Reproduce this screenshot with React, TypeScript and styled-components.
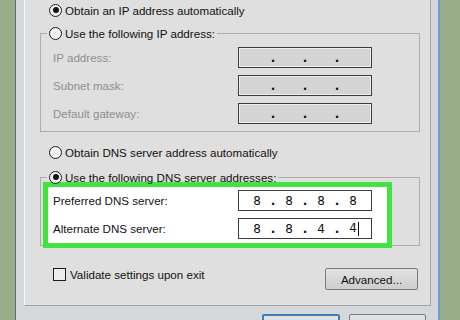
import * as React from 'react';
import styled, { createGlobalStyle } from 'styled-components';

const GlobalStyle = createGlobalStyle`
    html, body {
        margin: 0;
        padding: 0;
        background: #97ae88;
    }
    body {
        font-family: "Liberation Sans", Arial, sans-serif;
        font-size: 11.6px;
        color: #111;
    }
`;

const Page = styled.div`
    display: flex;
    width: 460px;
    height: 320px;
    overflow: hidden;
    background: #97ae88;
`;

const Window = styled.div`
    display: flex;
    flex-direction: column;
    margin-left: 15px;
    width: 407px;
    padding: 0 7px 0 8px;
    background: #d5d8db;
    border-left: 1px solid #5d6b74;
    border-right: 2px solid #6c9dd0;
`;

const Panel = styled.div`
    display: flex;
    flex-direction: column;
    padding: 2px 0 15px;
    background: #dfdfdf;
    border-left: 1px solid #f7f7f7;
    border-right: 1px solid #a3a3a3;
    border-bottom: 1px solid #a3a3a3;
`;

const OptionRow = styled.div<{ $gap?: number }>`
    display: flex;
    align-items: center;
    height: 16px;
    padding-left: 24px;
    margin-top: ${p => p.$gap || 0}px;
`;

const RadioCircle = styled.span<{ $checked?: boolean }>`
    display: flex;
    align-items: center;
    justify-content: center;
    flex: none;
    box-sizing: border-box;
    width: 13px;
    height: 13px;
    margin-right: 3px;
    border: 1.5px solid #1c1c1c;
    border-radius: 50%;
    background: #f2f2f2;

    &::after {
        content: '';
        display: ${p => (p.$checked ? 'block' : 'none')};
        width: 6px;
        height: 6px;
        border-radius: 50%;
        background: #111;
    }
`;

const GroupBox = styled.fieldset<{ $gap: number }>`
    margin: ${p => p.$gap}px 10px 0 15px;
    padding: 0;
    min-inline-size: 0;
    border: 1px solid #adadad;
`;

const GroupLegend = styled.legend`
    display: flex;
    align-items: center;
    height: 16px;
    margin-left: 6px;
    padding: 0 2px;
`;

const FieldGrid = styled.div`
    display: flex;
    flex-direction: column;
    gap: 7px;
    padding: 6px 0 7px 12px;
`;

const FieldRow = styled.div`
    display: flex;
    align-items: center;
`;

const FieldLabel = styled.span<{ $disabled?: boolean }>`
    width: 185px;
    color: ${p => (p.$disabled ? '#8e8e8e' : '#111')};
`;

const IpField = styled.div<{ $disabled?: boolean }>`
    display: flex;
    justify-content: center;
    align-items: center;
    box-sizing: border-box;
    width: 134px;
    height: 21px;
    border: 1px solid #3c3c3c;
    background: ${p => (p.$disabled ? '#d4d4d4' : '#fff')};
    box-shadow: inset 0 0 0 1px ${p => (p.$disabled ? '#ededed' : '#fff')};
    font-family: "DejaVu Sans", sans-serif;
    font-size: 12px;
`;

const Segment = styled.span`
    width: 26px;
    text-align: center;
`;

const Dot = styled.span`
    width: 6px;
    text-align: center;
    font-weight: bold;
`;

const Caret = styled.span`
    display: inline-block;
    width: 1px;
    height: 14px;
    margin: 0 -2px 0 1px;
    vertical-align: middle;
    background: #111;
`;

const Highlight = styled.div`
    display: flex;
    flex-direction: column;
    gap: 7px;
    width: 329px;
    margin: -3px 0 -3px 2px;
    padding: 3px 5px 4px;
    border: 5px solid #40e340;
    background: #fff;
`;

const ActionRow = styled.div`
    display: flex;
    justify-content: space-between;
    align-items: flex-start;
    margin-top: 22px;
    padding: 0 12px 0 28px;
`;

const CheckLabel = styled.label`
    display: flex;
    align-items: center;
    height: 13px;
`;

const CheckBox = styled.span`
    box-sizing: border-box;
    width: 13px;
    height: 13px;
    margin-right: 4px;
    border: 1.5px solid #1c1c1c;
    background: #ededed;
`;

const PushButton = styled.button<{ $primary?: boolean; $width: number }>`
    box-sizing: border-box;
    flex: none;
    width: ${p => p.$width}px;
    height: 22px;
    padding: 0;
    font: inherit;
    color: #111;
    border: ${p => (p.$primary ? '2px solid #3f7db3' : '1px solid #7a7a7a')};
    border-radius: 2px;
    background: linear-gradient(#e2e2e2, #cdcdcd);
`;

// OK / Cancel are cut off by the bottom edge; only their top frame shows
const DialogButtons = styled.div`
    display: flex;
    justify-content: flex-end;
    gap: 9px;
    margin-top: 8px;
    padding-right: 5px;

    ${PushButton} {
        height: 44px;
    }
`;

function Address({ parts, disabled, caret }: { parts: string[]; disabled?: boolean; caret?: boolean }) {
    return (
        <IpField $disabled={disabled}>
            {parts.map((p, i) => (
                <React.Fragment key={i}>
                    {i > 0 && <Dot>.</Dot>}
                    <Segment>
                        {p}
                        {caret && i === parts.length - 1 && <Caret />}
                    </Segment>
                </React.Fragment>
            ))}
        </IpField>
    );
}

const blank = ['', '', '', ''];

export default function App() {
    return (
        <Page>
            <GlobalStyle />
            <Window>
                <Panel>
                    <OptionRow>
                        <RadioCircle $checked />
                        Obtain an IP address automatically
                    </OptionRow>
                    <GroupBox $gap={7}>
                        <GroupLegend>
                            <RadioCircle />
                            Use the following IP address:
                        </GroupLegend>
                        <FieldGrid>
                            <FieldRow>
                                <FieldLabel $disabled>IP address:</FieldLabel>
                                <Address parts={blank} disabled />
                            </FieldRow>
                            <FieldRow>
                                <FieldLabel $disabled>Subnet mask:</FieldLabel>
                                <Address parts={blank} disabled />
                            </FieldRow>
                            <FieldRow>
                                <FieldLabel $disabled>Default gateway:</FieldLabel>
                                <Address parts={blank} disabled />
                            </FieldRow>
                        </FieldGrid>
                    </GroupBox>
                    <OptionRow $gap={12}>
                        <RadioCircle />
                        Obtain DNS server address automatically
                    </OptionRow>
                    <GroupBox $gap={9}>
                        <GroupLegend>
                            <RadioCircle $checked />
                            Use the following DNS server addresses:
                        </GroupLegend>
                        <Highlight>
                            <FieldRow>
                                <FieldLabel>Preferred DNS server:</FieldLabel>
                                <Address parts={['8', '8', '8', '8']} />
                            </FieldRow>
                            <FieldRow>
                                <FieldLabel>Alternate DNS server:</FieldLabel>
                                <Address parts={['8', '8', '4', '4']} caret />
                            </FieldRow>
                        </Highlight>
                    </GroupBox>
                    <ActionRow>
                        <CheckLabel>
                            <CheckBox />
                            Validate settings upon exit
                        </CheckLabel>
                        <PushButton $width={93}>Advanced...</PushButton>
                    </ActionRow>
                </Panel>
                <DialogButtons>
                    <PushButton $primary $width={78}>OK</PushButton>
                    <PushButton $width={77}>Cancel</PushButton>
                </DialogButtons>
            </Window>
        </Page>
    );
}
